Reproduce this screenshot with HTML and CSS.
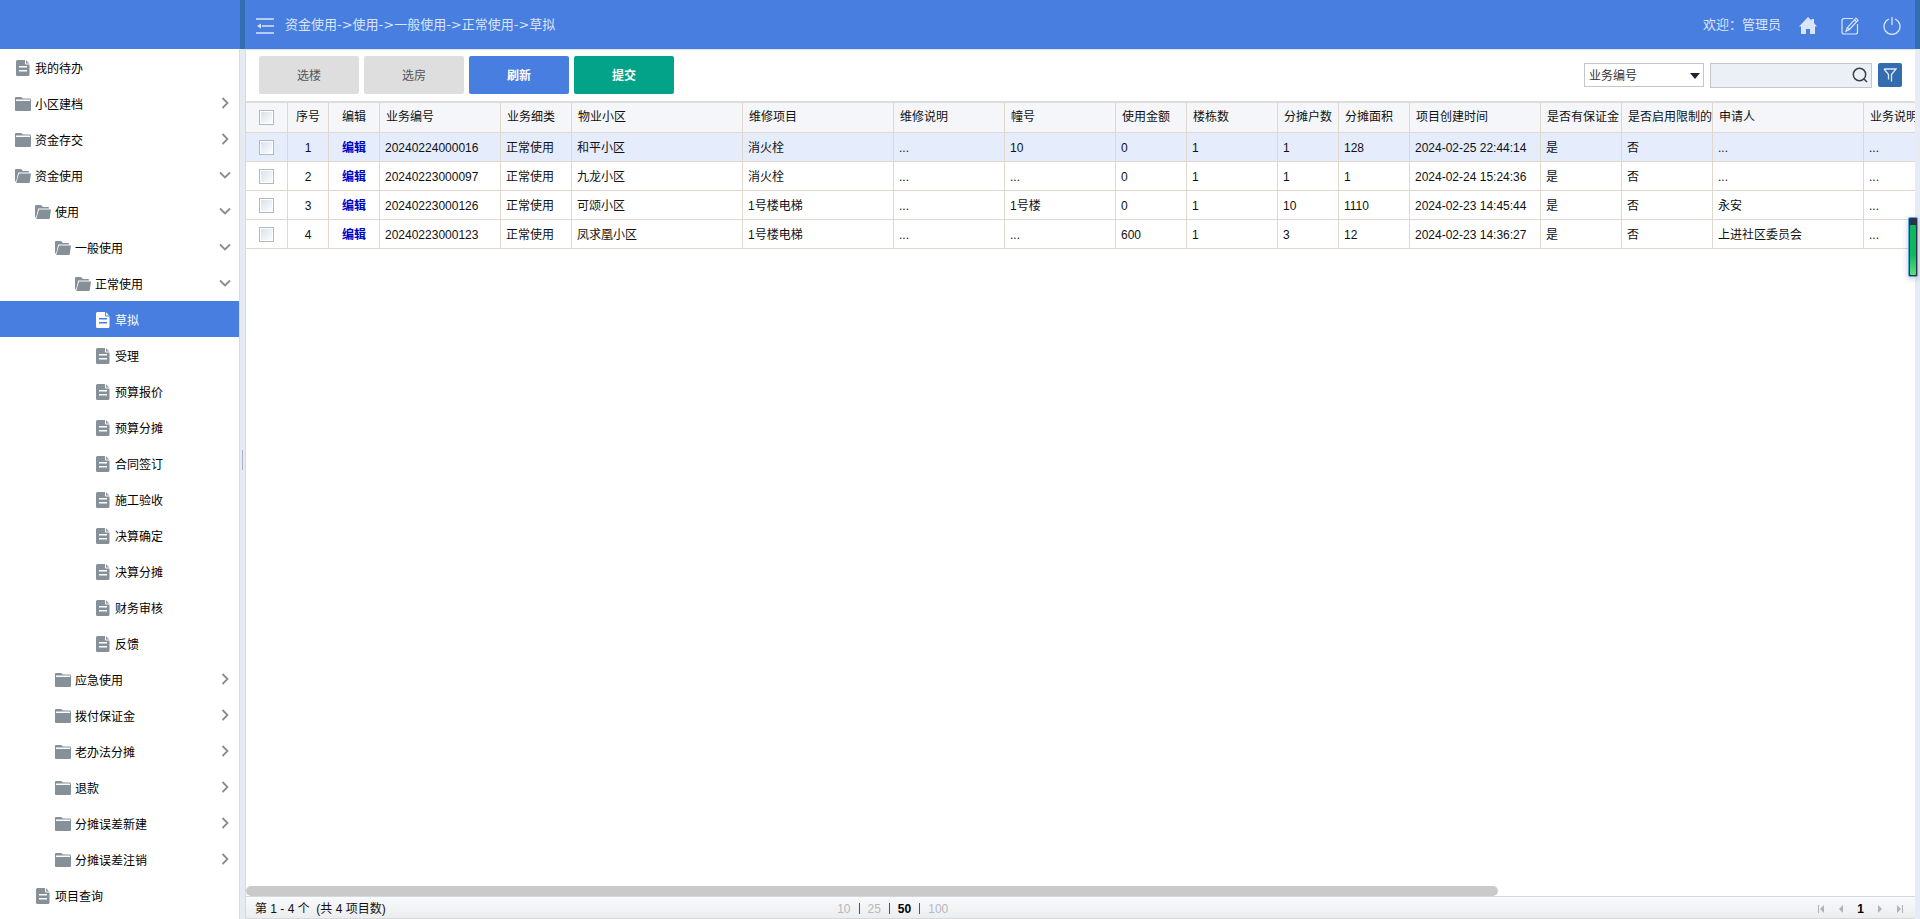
FILE: index.html
```html
<!DOCTYPE html>
<html lang="zh-CN">
<head>
<meta charset="utf-8">
<title>草拟</title>
<link rel="stylesheet" href="styles.css">
</head>
<body>
<svg class="sprite" aria-hidden="true">
  <symbol id="doc" viewBox="0 0 16 16"><path fill="currentColor" fill-rule="evenodd" d="M2.500 0H10v3.500a1 1 0 0 0 1 1h3.500V14.500a1.500 1.500 0 0 1-1.500 1.500H2.500A1.500 1.500 0 0 1 1 14.500v-13A1.500 1.500 0 0 1 2.500 0zM4 6v1.500h8V6zM4 10v1.500h8V10z"/><path fill="currentColor" d="M11 .3v3.200h3z"/></symbol>
  <symbol id="folder" viewBox="0 0 16 16"><path fill="currentColor" d="M0 2.200Q0 1 1 1h5l2 1.500h7q1 0 1 1H0zM0 5h16v9q0 1-1 1H1q-1 0-1-1z"/><path fill="currentColor" d="M0 3h1v3H0zM15 3.500h1V6h-1z"/></symbol>
  <symbol id="folder-open" viewBox="0 0 16 16"><path fill="currentColor" d="M0 2q0-1 1-1h5l2 2h5q1 0 1 1v.5H3.200L1.500 12 0 14z"/><path fill="currentColor" d="M4 5.500h12L14.800 14q-.1 1-1 1H1.200z"/></symbol>
  <symbol id="right" viewBox="0 0 12 12"><path fill="none" stroke="currentColor" stroke-width="1.800" d="M3.500 1l5 5-5 5"/></symbol>
  <symbol id="down" viewBox="0 0 12 12"><path fill="none" stroke="currentColor" stroke-width="1.800" d="M1 3.500l5 5 5-5"/></symbol>
</svg>
<div class="app">
  <div class="brand"></div>
  <div class="edge"></div>
  <header class="header">
    <button class="icon-btn" aria-label="收起菜单"><svg width="18" height="18" viewBox="0 0 18 18" fill="none" stroke="currentColor" stroke-width="1.500"><path d="M0 2h18M6 9h12M0 16h18"/><path fill="currentColor" stroke="none" d="M1 9l4-2.500v5z"/></svg></button>
    <span class="crumbs">资金使用-&gt;使用-&gt;一般使用-&gt;正常使用-&gt;草拟</span>
    <span class="welcome">欢迎：管理员</span>
    <nav class="actions">
      <button class="icon-btn" aria-label="首页"><svg width="18" height="18" viewBox="0 0 18 18"><path fill="currentColor" d="M9 0l3.500 3.500V2H15v4l3 3.500h-2V17h-5v-5H7v5H2V9.500H0z"/></svg></button>
      <button class="icon-btn" aria-label="编辑"><svg width="18" height="18" viewBox="0 0 18 18" fill="none" stroke="currentColor" stroke-width="1.200"><path d="M12 1.500H3A2 2 0 0 0 1 3.500V15a2 2 0 0 0 2 2h11.500a2 2 0 0 0 2-2V7"/><path d="M15 1.200l2 2L8.500 12.500l-3.500 1.800L6.300 10.800zM6.300 10.800l2.200 1.700M13.500 3l2 1.800"/></svg></button>
      <button class="icon-btn" aria-label="退出"><svg width="18" height="18" viewBox="0 0 18 18" fill="none" stroke="currentColor" stroke-width="1.300"><path d="M9 0v8M6 2a8 8 0 1 0 6 0"/></svg></button>
    </nav>
  </header>
  <div class="edge"></div>

  <nav class="sidebar">
    <ul class="tree">
      <li><a class="node" href="#"><svg class="ico"><use href="#doc"/></svg><span>我的待办</span></a></li>
      <li><a class="node" href="#"><svg class="ico"><use href="#folder"/></svg><span>小区建档</span><svg class="arrow"><use href="#right"/></svg></a></li>
      <li><a class="node" href="#"><svg class="ico"><use href="#folder"/></svg><span>资金存交</span><svg class="arrow"><use href="#right"/></svg></a></li>
      <li><a class="node" href="#"><svg class="ico"><use href="#folder-open"/></svg><span>资金使用</span><svg class="arrow"><use href="#down"/></svg></a></li>
      <li><a class="node lv1" href="#"><svg class="ico"><use href="#folder-open"/></svg><span>使用</span><svg class="arrow"><use href="#down"/></svg></a></li>
      <li><a class="node lv2" href="#"><svg class="ico"><use href="#folder-open"/></svg><span>一般使用</span><svg class="arrow"><use href="#down"/></svg></a></li>
      <li><a class="node lv3" href="#"><svg class="ico"><use href="#folder-open"/></svg><span>正常使用</span><svg class="arrow"><use href="#down"/></svg></a></li>
      <li><a class="node lv4 active" href="#"><svg class="ico"><use href="#doc"/></svg><span>草拟</span></a></li>
      <li><a class="node lv4" href="#"><svg class="ico"><use href="#doc"/></svg><span>受理</span></a></li>
      <li><a class="node lv4" href="#"><svg class="ico"><use href="#doc"/></svg><span>预算报价</span></a></li>
      <li><a class="node lv4" href="#"><svg class="ico"><use href="#doc"/></svg><span>预算分摊</span></a></li>
      <li><a class="node lv4" href="#"><svg class="ico"><use href="#doc"/></svg><span>合同签订</span></a></li>
      <li><a class="node lv4" href="#"><svg class="ico"><use href="#doc"/></svg><span>施工验收</span></a></li>
      <li><a class="node lv4" href="#"><svg class="ico"><use href="#doc"/></svg><span>决算确定</span></a></li>
      <li><a class="node lv4" href="#"><svg class="ico"><use href="#doc"/></svg><span>决算分摊</span></a></li>
      <li><a class="node lv4" href="#"><svg class="ico"><use href="#doc"/></svg><span>财务审核</span></a></li>
      <li><a class="node lv4" href="#"><svg class="ico"><use href="#doc"/></svg><span>反馈</span></a></li>
      <li><a class="node lv2" href="#"><svg class="ico"><use href="#folder"/></svg><span>应急使用</span><svg class="arrow"><use href="#right"/></svg></a></li>
      <li><a class="node lv2" href="#"><svg class="ico"><use href="#folder"/></svg><span>拨付保证金</span><svg class="arrow"><use href="#right"/></svg></a></li>
      <li><a class="node lv2" href="#"><svg class="ico"><use href="#folder"/></svg><span>老办法分摊</span><svg class="arrow"><use href="#right"/></svg></a></li>
      <li><a class="node lv2" href="#"><svg class="ico"><use href="#folder"/></svg><span>退款</span><svg class="arrow"><use href="#right"/></svg></a></li>
      <li><a class="node lv2" href="#"><svg class="ico"><use href="#folder"/></svg><span>分摊误差新建</span><svg class="arrow"><use href="#right"/></svg></a></li>
      <li><a class="node lv2" href="#"><svg class="ico"><use href="#folder"/></svg><span>分摊误差注销</span><svg class="arrow"><use href="#right"/></svg></a></li>
      <li><a class="node lv1" href="#"><svg class="ico"><use href="#doc"/></svg><span>项目查询</span></a></li>
    </ul>
  </nav>
  <div class="splitter"><div class="grip"></div></div>
  <main class="main">
    <div class="toolbar">
      <button class="btn">选楼</button>
      <button class="btn">选房</button>
      <button class="btn primary">刷新</button>
      <button class="btn success">提交</button>
      <form class="search">
        <div class="select-box">
          <select class="field" aria-label="查询字段"><option>业务编号</option></select>
          <svg class="caret" width="10" height="6" viewBox="0 0 10 6"><path fill="#1d2434" d="M0 0h10L5 6z"/></svg>
        </div>
        <div class="keyword">
          <input type="text" aria-label="关键字">
          <button type="button" class="find" aria-label="搜索"><svg width="16" height="16" viewBox="0 0 16 16" fill="none" stroke="currentColor" stroke-width="1.500"><circle cx="7.500" cy="7.500" r="6.200"/><path d="M12 12l3 3"/></svg></button>
        </div>
        <button type="button" class="filter" aria-label="筛选"><svg width="14" height="14" viewBox="0 0 14 14" fill="none" stroke="currentColor" stroke-width="1.300"><path d="M1 1h12L8.500 6.500V13.500M5.500 11.500v-5L1 1"/></svg></button>
      </form>
    </div>
    <div class="grid">
      <table>
        <colgroup><col class="w42"><col class="w41"><col class="w51"><col class="w121"><col class="w71"><col class="w171"><col class="w151"><col class="w111"><col class="w111"><col class="w71"><col class="w91"><col class="w61"><col class="w71"><col class="w131"><col class="w81"><col class="w91"><col class="w151"><col class="w151"></colgroup>
        <thead>
          <tr><th class="c"><input type="checkbox" aria-label="全选"></th><th class="c">序号</th><th class="c">编辑</th><th>业务编号</th><th>业务细类</th><th>物业小区</th><th>维修项目</th><th>维修说明</th><th>幢号</th><th>使用金额</th><th>楼栋数</th><th>分摊户数</th><th>分摊面积</th><th>项目创建时间</th><th>是否有保证金</th><th>是否启用限制的</th><th>申请人</th><th>业务说明</th></tr>
        </thead>
        <tbody>
          <tr class="on"><td class="c"><input type="checkbox" aria-label="选择 1"></td><td class="c">1</td><td class="c"><a href="#">编辑</a></td><td>20240224000016</td><td>正常使用</td><td>和平小区</td><td>消火栓</td><td>...</td><td>10</td><td>0</td><td>1</td><td>1</td><td>128</td><td>2024-02-25 22:44:14</td><td>是</td><td>否</td><td>...</td><td>...</td></tr>
          <tr><td class="c"><input type="checkbox" aria-label="选择 2"></td><td class="c">2</td><td class="c"><a href="#">编辑</a></td><td>20240223000097</td><td>正常使用</td><td>九龙小区</td><td>消火栓</td><td>...</td><td>...</td><td>0</td><td>1</td><td>1</td><td>1</td><td>2024-02-24 15:24:36</td><td>是</td><td>否</td><td>...</td><td>...</td></tr>
          <tr><td class="c"><input type="checkbox" aria-label="选择 3"></td><td class="c">3</td><td class="c"><a href="#">编辑</a></td><td>20240223000126</td><td>正常使用</td><td>可颂小区</td><td>1号楼电梯</td><td>...</td><td>1号楼</td><td>0</td><td>1</td><td>10</td><td>1110</td><td>2024-02-23 14:45:44</td><td>是</td><td>否</td><td>永安</td><td>...</td></tr>
          <tr><td class="c"><input type="checkbox" aria-label="选择 4"></td><td class="c">4</td><td class="c"><a href="#">编辑</a></td><td>20240223000123</td><td>正常使用</td><td>凤求凰小区</td><td>1号楼电梯</td><td>...</td><td>...</td><td>600</td><td>1</td><td>3</td><td>12</td><td>2024-02-23 14:36:27</td><td>是</td><td>否</td><td>上进社区委员会</td><td>...</td></tr>
        </tbody>
      </table>
    </div>
    <div class="hscroll"><div class="thumb"></div></div>
    <footer class="pager">
      <span class="total">第 1 - 4 个&nbsp; (共 4 项目数)</span>
      <div class="sizes"><a href="#">10</a><i></i><a href="#">25</a><i></i><b>50</b><i></i><a href="#">100</a></div>
      <div class="pages">
        <button aria-label="首页"><svg width="8" height="8" viewBox="0 0 8 8"><path fill="currentColor" d="M1 0h1v8H1zM7 0v8L3 4z"/></svg></button>
        <button aria-label="上一页"><svg width="8" height="8" viewBox="0 0 8 8"><path fill="currentColor" d="M6 0v8L2 4z"/></svg></button>
        <b>1</b>
        <button aria-label="下一页"><svg width="8" height="8" viewBox="0 0 8 8"><path fill="currentColor" d="M2 0v8l4-4z"/></svg></button>
        <button aria-label="末页"><svg width="8" height="8" viewBox="0 0 8 8"><path fill="currentColor" d="M6 0h1v8H6zM1 0v8l4-4z"/></svg></button>
      </div>
    </footer>
  </main>
  <div class="rail"></div>
</div>
<div class="gauge"><div class="level"></div></div>
</body>
</html>
```
FILE: styles.css
```css
* { box-sizing: border-box; }
body {
  margin: 0;
  font: 12px/18px "Liberation Sans", "Noto Sans CJK SC", sans-serif;
  color: #000;
  background: #fff;
}
button { font: inherit; border: 0; padding: 0; background: none; cursor: pointer; }
a { text-decoration: none; }
svg { display: block; }
.sprite { position: absolute; width: 0; height: 0; }
.app {
  display: grid;
  grid-template: 49px minmax(0, 1fr) / 240px 6px minmax(0, 1fr) 5px;
  height: 100vh;
  overflow: hidden;
}
.brand, .header { background: #477ee0; }
.edge { background: #346db2; width: 5px; }
.header {
  display: flex;
  align-items: center;
  margin-left: -1px;
  padding: 0 14px 0 11px;
  color: #dae5f9;
  font-size: 13px;
}
.icon-btn { color: inherit; }
.icon-btn svg { margin-top: 2px; }
.crumbs { margin-left: 11px; font-family: "DejaVu Sans", "Noto Sans CJK SC", sans-serif; }
.welcome { margin-left: auto; }
.actions { display: flex; gap: 24px; margin-left: 18px; }

.sidebar { border-right: 1px solid #d8dce2; overflow: hidden; }
.tree { list-style: none; margin: 0; padding: 0; }
.node {
  display: flex;
  align-items: center;
  gap: 4px;
  height: 36px;
  padding: 2px 8px 0 15px;
  color: #000;
}
.node span { padding-top: 2px; }
.lv1 { padding-left: 35px; }
.lv2 { padding-left: 55px; }
.lv3 { padding-left: 75px; }
.lv4 { padding-left: 95px; }
.ico { width: 16px; height: 16px; color: #869098; }
.arrow { width: 12px; height: 12px; margin: 0 0 2px auto; color: #8c8c8c; }
.active { background: #477ee0; color: #fff; }
.active .ico { color: #fff; }

.splitter {
  display: flex;
  align-items: center;
  padding-left: 2px;
  background: #e6eaf1;
  border-right: 1px solid #d5d9e0;
}
.grip { width: 1px; height: 20px; margin-bottom: 48px; background: #aab4cc; }
.rail { background: #e6ebf5; }

.main { display: flex; flex-direction: column; min-width: 0; border-top: 1px solid #dce4f2; }
.toolbar {
  display: flex;
  align-items: center;
  gap: 5px;
  padding: 6px 13px 7px;
  border-bottom: 2px solid #dcdcdc;
}
.btn { width: 100px; height: 38px; padding-top: 2px; border-radius: 2px; background: #dedede; color: #555; }
.primary { background: #477ee0; color: #fff; font-weight: bold; }
.success { background: #03a389; color: #fff; font-weight: bold; }
.search { display: flex; align-items: center; gap: 6px; margin-left: auto; }
.select-box, .keyword { display: flex; align-items: center; position: relative; height: 24px; border: 1px solid #c6c6c6; }
.select-box { width: 120px; }
.field { appearance: none; width: 100%; height: 22px; padding: 2px 4px 0; border: 0; background: #fff; font: inherit; color: #333; }
.caret { position: absolute; right: 3px; top: 9px; pointer-events: none; }
.keyword { width: 162px; height: 25px; background: #ebf0f7; }
.keyword input { flex: 1; min-width: 0; height: 23px; border: 0; padding: 0 4px; background: none; font: inherit; }
.find { margin-right: 3px; color: #3a4048; }
.filter { display: grid; place-items: center; width: 24px; height: 24px; border-radius: 2px; background: #346cb0; color: #e0eaf6; }

.grid { flex: 1; min-height: 0; overflow: hidden; }
table { table-layout: fixed; width: 1769px; border-collapse: separate; border-spacing: 0; }
th, td {
  overflow: hidden;
  white-space: nowrap;
  text-align: left;
  border-right: 1px solid #e0d8cc;
  border-bottom: 1px solid #e0d8cc;
}
th { height: 30px; padding: 0 0 1px 6px; background: #f4f6fa; color: #111; font-weight: normal; }
td { height: 29px; padding: 1px 0 0 5px; color: #111; }
.on td { background: #e5ecfc; }
.c { text-align: center; padding-left: 0; }
td a { color: #0000c8; font-weight: bold; }
.grid input {
  appearance: none;
  display: block;
  width: 15px;
  height: 15px;
  margin: 0 auto;
  border: 1px solid #b2b8be;
  background: linear-gradient(135deg, #d4e1ea, #fff);
  box-shadow: inset 0 0 0 1px #fff;
}
.w41 { width: 41px; }
.w42 { width: 42px; }
.w51 { width: 51px; }
.w61 { width: 61px; }
.w71 { width: 71px; }
.w81 { width: 81px; }
.w91 { width: 91px; }
.w111 { width: 111px; }
.w121 { width: 121px; }
.w131 { width: 131px; }
.w151 { width: 151px; }
.w171 { width: 171px; }

.hscroll { height: 10px; }
.thumb { width: 75%; height: 10px; border-radius: 5px; background: #cacaca; }
.pager {
  display: grid;
  grid-template-columns: 35% auto 1fr;
  align-items: center;
  height: 23px;
  padding: 2px 11px 0 9px;
  border: solid #d8d8d8;
  border-width: 1px 0;
  background: linear-gradient(#f9fafd, #ebedee);
}
.total { color: #111; }
.sizes { display: flex; align-items: center; gap: 8px; padding-left: 5px; }
.sizes a { color: #b4b8bf; }
.sizes i { width: 1px; height: 11px; background: #555; }
.pages { display: flex; align-items: center; justify-content: flex-end; gap: 12px; }
.pages button { color: #b0b2b5; }

.gauge {
  position: absolute;
  top: 217px;
  right: 2px;
  width: 10px;
  height: 60px;
  padding: 7px 1px 1px;
  border: 1px solid #58a6ea;
  border-radius: 2px;
  background: #27344c;
  box-shadow: 0 2px 6px rgba(0, 0, 0, .2);
}
.level { height: 100%; border-radius: 1px; background: linear-gradient(#10b85c 60%, #5fe07a); }
```
